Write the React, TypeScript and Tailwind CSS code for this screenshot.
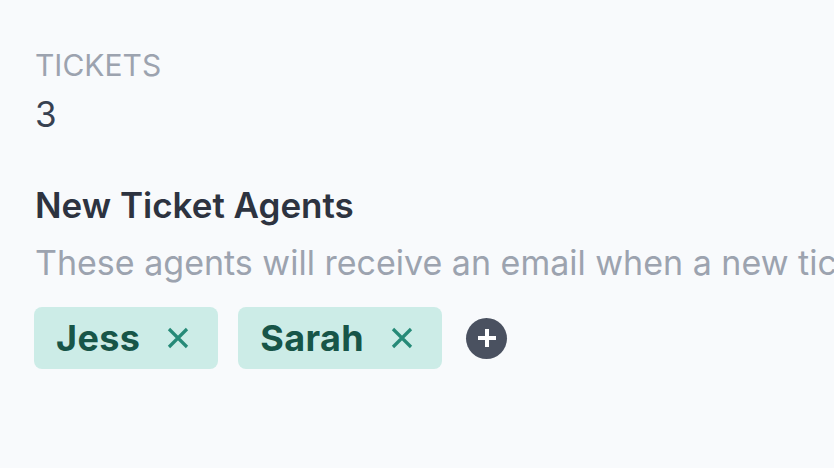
const agents = ["Jess", "Sarah"];

function CloseIcon() {
  return (
    <svg viewBox="0 0 24 24" className="w-[24px] h-[24px] text-[#268a78]" fill="none" stroke="currentColor" strokeWidth={3.2} strokeLinecap="butt">
      <path d="M3 3 L21 21 M21 3 L3 21" />
    </svg>
  );
}

export default function App() {
  return (
    <div className="w-[834px] h-[468px] bg-[#f8fafc] overflow-hidden font-['Inter',sans-serif]">
      <div className="pl-[35px] pt-[47px]">
        {/* Ticket count */}
        <div className="text-[30px] leading-[36px] text-[#9ca3af]">TICKETS</div>
        <div className="text-[35px] leading-[40px] text-[#374151] mt-[11px]">3</div>

        {/* Agents */}
        <div className="mt-[51px] text-[35px] leading-[40px] font-semibold text-[#2d3340]">New Ticket Agents</div>
        <div className="text-[34px] leading-[40px] text-[#9ca3af] whitespace-nowrap mt-[18px]">
          These agents will receive an email when a new ticket is created.
        </div>

        <div className="flex items-center mt-[24px] -ml-[1px]">
          {agents.map((name) => (
            <div key={name} className="flex items-center h-[62px] pl-[22px] pr-[28px] gap-[26px] mr-[20px] bg-[#ccece7] rounded-[8px]">
              <span className="text-[36px] tracking-[0.01em] font-bold text-[#175548]">{name}</span>
              <CloseIcon />
            </div>
          ))}
          <div className="w-[41px] h-[41px] rounded-full bg-[#4a5160] flex items-center justify-center ml-[4px]">
            <svg viewBox="0 0 20 20" className="w-[20px] h-[20px]" fill="none" stroke="white" strokeWidth={4}>
              <path d="M10 1 V19 M1 10 H19" />
            </svg>
          </div>
        </div>
      </div>
    </div>
  );
}
